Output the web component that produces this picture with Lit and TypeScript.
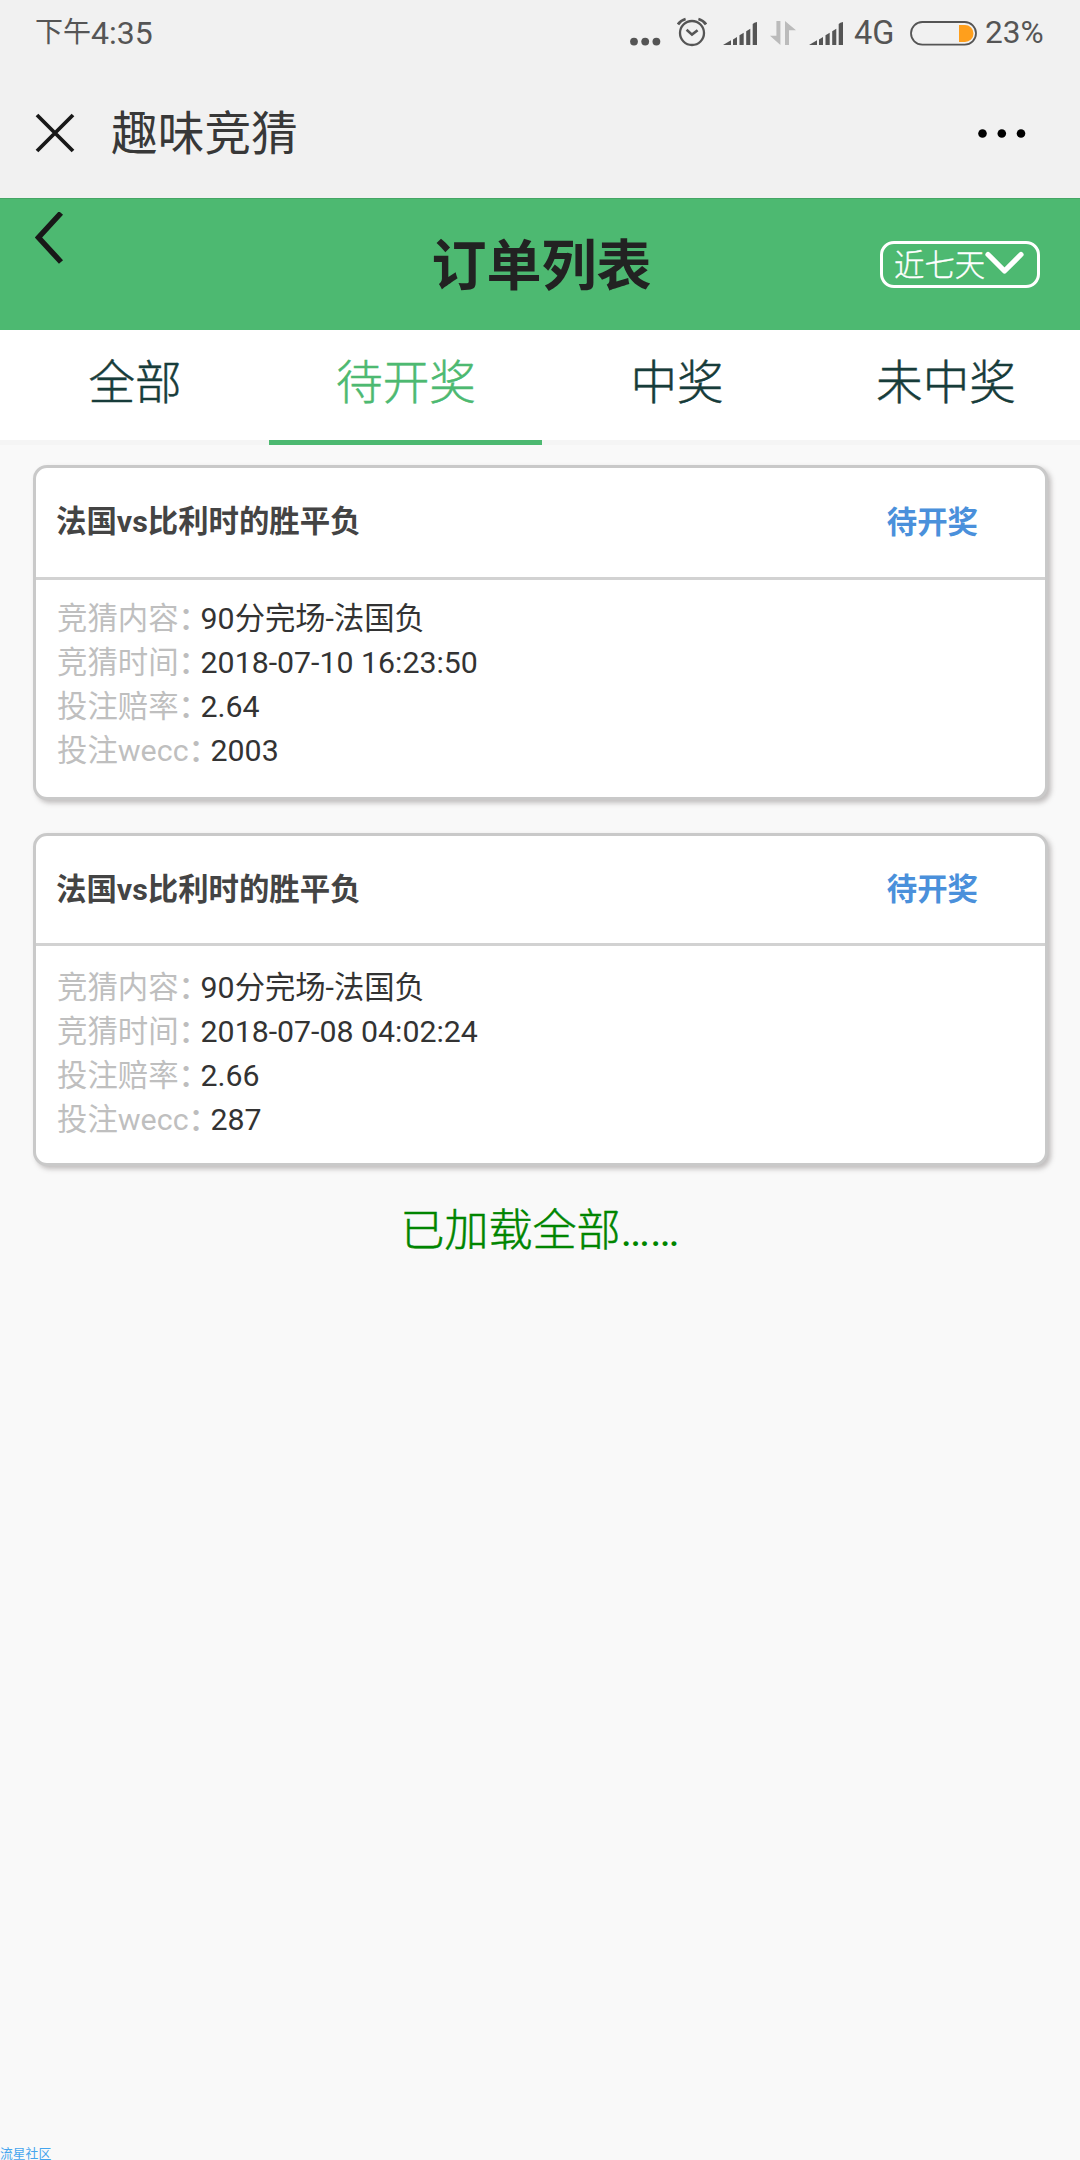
import { LitElement, html, css, svg } from "lit";
import { customElement, property, state } from "lit/decorators.js";
import { classMap } from "lit/directives/class-map.js";

interface Order {
  title: string;
  status: string;
  rows: [string, string][];
}

const ORDERS: Order[] = [
  {
    title: "法国vs比利时的胜平负",
    status: "待开奖",
    rows: [
      ["竞猜内容", "90分完场-法国负"],
      ["竞猜时间", "2018-07-10 16:23:50"],
      ["投注赔率", "2.64"],
      ["投注wecc", "2003"],
    ],
  },
  {
    title: "法国vs比利时的胜平负",
    status: "待开奖",
    rows: [
      ["竞猜内容", "90分完场-法国负"],
      ["竞猜时间", "2018-07-08 04:02:24"],
      ["投注赔率", "2.66"],
      ["投注wecc", "287"],
    ],
  },
];

const signalBars = svg`
  <path d="M0 23 L8 18.3 V23 Z M10 17.5 L14 15 V23 H10 Z M16.5 13.3 L20.7 10.7 V23 H16.5 Z M23.2 9.3 L27.3 6.7 V23 H23.2 Z M29.7 2 Q31 0.5 34 0 V23 H29.7 Z" fill="#555"/>`;

@customElement("status-bar")
class StatusBar extends LitElement {
  static styles = css`
    :host { display: block; }
    .bar {
      height: 66px; box-sizing: border-box; padding: 0 35px 0 35px;
      display: flex; align-items: center; color: #555;
      font: 32px/68px Roboto, "Noto Sans CJK SC", sans-serif;
    }
    .period { font-size: 28px; }
    .clock { display: flex; flex: 1; }
    svg { display: block; flex: none; }
    .dots { margin-right: 16px; }
    .alarm { margin-right: 16px; }
    .signal { margin-right: 13px; }
    .data { margin-right: 13px; }
    .signal.second { margin-right: 11px; }
    .net { width: 42px; margin-right: 14px; font-size: 32.5px; white-space: nowrap; }
    .battery { margin-right: 8px; }
    .pct { width: 60px; white-space: nowrap; font-size: 31.6px; }
  `;
  render() {
    return html`<div class="bar">
      <div class="clock"><span class="period">下午</span><span>4:35</span></div>
      <svg class="dots" width="31" height="66" viewBox="0 0 31 66" fill="#555">
        <circle cx="4" cy="41.6" r="3.9"/><circle cx="15.2" cy="41.6" r="3.9"/><circle cx="26.4" cy="41.6" r="3.9"/>
      </svg>
      <svg class="alarm" width="30" height="66" viewBox="0 0 30 66" fill="none" stroke="#555" stroke-width="2.3">
        <circle cx="15" cy="33" r="12"/>
        <path d="M9.6 29.8 L15 34.6 L20.6 30.2" stroke-width="2.6"/>
        <path d="M1 24.4 Q3.6 20.3 8.6 19 M29 24.4 Q26.4 20.3 21.4 19" stroke-width="2.8"/>
      </svg>
      <svg class="signal" width="34" height="23" viewBox="0 0 34 23">${signalBars}</svg>
      <svg class="data" width="26" height="24" viewBox="0 0 26 24" fill="#bbb">
        <path d="M6.4 0 H10.4 V24 L0 14.7 H6.4 Z M15 24 V0 L26 9.3 H19 V24 Z"/>
      </svg>
      <svg class="signal second" width="34" height="23" viewBox="0 0 34 23">${signalBars}</svg>
      <span class="net">4G</span>
      <svg class="battery" width="67" height="25" viewBox="0 0 67 25">
        <rect x="1" y="1" width="65" height="22.6" rx="11.3" fill="none" stroke="#555" stroke-width="1.8"/>
        <path d="M49 4 H55 A8.5 8.5 0 0 1 55 21 H49 Z" fill="#ff9f1c"/>
      </svg>
      <span class="pct">23%</span>
    </div>`;
  }
}

@customElement("order-card")
class OrderCard extends LitElement {
  @property({ attribute: false }) order!: Order;
  static styles = css`
    :host { display: block; }
    .card {
      box-sizing: border-box; border: 3px solid #c9c9c9; border-radius: 14px;
      background: #fff; box-shadow: 3px 3px 5px rgba(90, 80, 80, 0.35);
      height: var(--card-h);
      font: 30.4px/44px Roboto, "Noto Sans CJK SC", sans-serif;
      overflow: hidden;
    }
    .head {
      height: var(--head-h); box-sizing: content-box; border-bottom: 3px solid #d2d2d2;
      padding: 0 67px 0 20px; display: flex; align-items: center; justify-content: space-between;
      font-weight: 700;
    }
    .title { color: #444; padding-bottom: var(--title-lift); }
    .status { color: #4a90db; padding-top: 1px; }
    .body { padding: var(--body-pad) 21px 0; }
    .row { display: flex; height: 44px; white-space: nowrap; }
    .label { color: #bfbfbf; }
    .colon { color: #bdbdbd; letter-spacing: -8.4px; font-weight: 500; }
    .value { color: #333; font-size: 30.3px; }
  `;
  render() {
    const o = this.order;
    return html`<div class="card">
      <div class="head"><span class="title">${o.title}</span><span class="status">${o.status}</span></div>
      <div class="body">
        ${o.rows.map(([k, v]) => html`<div class="row"><span class="label">${k}</span><span class="colon">：</span><span class="value">${v}</span></div>`)}
      </div>
    </div>`;
  }
}

@customElement("app-root")
class AppRoot extends LitElement {
  @state() private active = 1;
  private tabs = ["全部", "待开奖", "中奖", "未中奖"];

  static styles = css`
    :host {
      display: block; font-family: Roboto, "Noto Sans CJK SC", sans-serif;
    }
    .page {
      width: 1080px; height: 2160px; background: #f9f9f9; overflow: hidden;
      display: flex; flex-direction: column;
    }
    .chrome { height: 198px; background: #f1f1f1; flex: none; }
    .nav { height: 132px; display: flex; align-items: center; padding: 1px 52px 0 35px; box-sizing: border-box; }
    .nav svg { display: block; }
    .nav-title { flex: 1; margin-left: 36px; padding-top: 3px; font-size: 46.7px; line-height: 66px; color: #383838; }
    .header {
      height: 132px; flex: none; box-sizing: border-box; border-top: 1px solid #45a665; background: #4db971;
      display: grid; grid-template-columns: 1fr auto 1fr; align-items: center; padding: 0 40px 0 35px;
    }
    .back { align-self: start; margin-top: 13px; display: block; }
    .heading { font-size: 55px; font-weight: 700; color: #222; line-height: 80px; padding: 2px 0 0 8px; }
    .filter {
      justify-self: end; box-sizing: border-box; width: 160px; height: 47px;
      border: 3px solid #fff; border-radius: 14px; color: #fff;
      font-size: 30.4px; line-height: 41px; display: flex; align-items: center;
      padding-left: 11px; white-space: nowrap; font-weight: 300; -webkit-text-stroke: 0.35px currentColor;
    }
    .filter span { padding-top: 2px; }
    .filter svg { flex: none; margin-top: -3px; }
    .tabs { display: grid; grid-template-columns: 269px 273px 269px 269px; flex: none; height: 115px; background: #fff; }
    .tab {
      text-align: center; font-size: 46.6px; line-height: 107px; height: 110px; color: #173c3a;
      font-weight: 300; -webkit-text-stroke: 0.5px currentColor;
      border-bottom: 5px solid #f5f5f5; cursor: pointer; padding-left: 1px;
    }
    .tab.on { color: #4db971; border-bottom-color: #4db971; }
    .list { padding: 20px 32px 0 33px; display: flex; flex-direction: column; gap: 33px; }
    .first { --card-h: 335px; --head-h: 109px; --title-lift: 1px; --body-pad: 17px; }
    .second { --card-h: 333px; --head-h: 107px; --title-lift: 0px; --body-pad: 20px; }
    .end {
      text-align: center; font-size: 44px; line-height: 64px; margin-top: 33px; color: #008500; flex: 1;
      font-weight: 300; -webkit-text-stroke: 0.5px currentColor;
    }
    .ellipsis { font-weight: 400; -webkit-text-stroke: 0; }
    .mark { flex: none; height: 12px; font-size: 12.8px; line-height: 12px; color: #45a5ee; }
  `;

  render() {
    return html`<div class="page">
      <div class="chrome">
        <status-bar></status-bar>
        <div class="nav">
          <svg width="40" height="40" viewBox="0 0 40 40" fill="none" stroke="#181818" stroke-width="3.8">
            <path d="M2 2 L38 38 M38 2 L2 38"/>
          </svg>
          <span class="nav-title">趣味竞猜</span>
          <svg width="50" height="10" viewBox="0 0 50 10">
            <circle cx="4.5" cy="5.5" r="4.3"/><circle cx="23.8" cy="5.5" r="4.3"/><circle cx="43" cy="5.5" r="4.3"/>
          </svg>
        </div>
      </div>
      <div class="header">
        <svg class="back" width="29" height="52" viewBox="0 0 29 52" fill="none" stroke="#181818" stroke-width="5.5">
          <path d="M26 1 L3.5 25.5 L26 50"/>
        </svg>
        <span class="heading">订单列表</span>
        <div class="filter">
          <span>近七天</span>
          <svg width="40" height="24" viewBox="0 0 40 24" fill="none" stroke="#fff" stroke-width="5.2" stroke-linecap="round" stroke-linejoin="round">
            <path d="M3 3.5 L19.5 20 L36 3.5"/>
          </svg>
        </div>
      </div>
      <div class="tabs">
        ${this.tabs.map((t, i) => html`<div class=${classMap({ tab: true, on: i === this.active })} @click=${() => (this.active = i)}>${t}</div>`)}
      </div>
      <div class="list">
        ${ORDERS.map((o, i) => html`<order-card class=${i === 0 ? "first" : "second"} .order=${o}></order-card>`)}
      </div>
      <div class="end">已加载全部<span class="ellipsis">……</span></div>
      <div class="mark">流星社区</div>
    </div>`;
  }
}
